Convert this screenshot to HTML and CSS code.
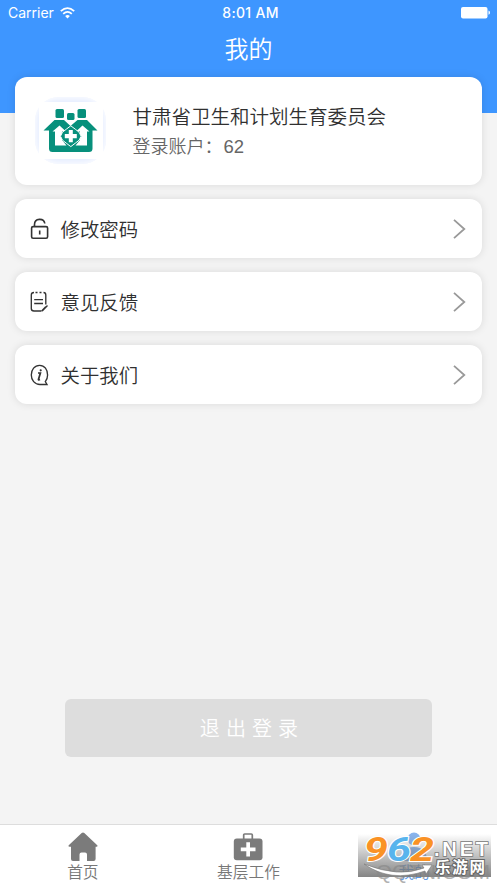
FILE: index.html
```html
<!DOCTYPE html>
<html lang="zh-CN">
<head>
<meta charset="utf-8">
<title>我的</title>
<link rel="stylesheet" href="styles.css">
</head>
<body>
<div class="app">
  <header class="header">
    <div class="status">
      <div class="carrier">Carrier
        <svg width="15" height="12" viewBox="0 0 15 12" fill="none" stroke="#fff" stroke-width="1.8"><path d="M.8 4.2Q7.5-1.9 14.2 4.2M3.2 6.8Q7.5 3 11.8 6.8"/><path d="M7.5 11.4 5.1 8.9Q7.5 7 9.9 8.9Z" fill="#fff" stroke="none"/></svg>
      </div>
      <div class="time">8:01 AM</div>
      <div class="battery"><svg width="29" height="12" viewBox="0 0 29 12" fill="#fff"><rect width="26.500" height="11.5" rx="2"/><path d="M27.500 3.6q1.500.4 1.500 2.1t-1.500 2.1z"/></svg></div>
    </div>
    <h1 class="title">我的</h1>
  </header>
  <main class="content">
    <section class="card profile">
      <div class="avatar">
        <svg width="64" height="57" viewBox="0 0 64 57">
          <rect width="64" height="57" fill="#fff"/>
          <g fill="#07907c">
            <rect x="16.500" y="7" width="8.500" height="9" rx="1.500"/><rect x="28" y="11" width="7.500" height="7" rx="1.500"/><rect x="38.500" y="7" width="8.500" height="9" rx="1.500"/>
            <path d="M4.500 28.500 15.500 18H25L31.500 24 38.500 18H48L58.500 28.500H53.500V46.500Q53.500 50 50 50H13.500Q10 50 10 46.500V28.500Z"/>
          </g>
          <path d="M16 43.500V29.500H13.500L20.500 23.500 27 29.500H23V38L27.500 43.500ZM48 43.500V29.500H50.500L43.500 23.500 37 29.500H41V38L36.500 43.500Z" fill="#fff"/>
          <path d="m31.800 23.800 4.500 3.400 3.800 3 2 4-2 4-3.800 3-4.500 3.400-4.500-3.400-3.800-3-2-4 2-4 3.800-3z" fill="#07907c" stroke="#fff" stroke-width="1"/>
          <path d="M29.800 28h4v4h4v4.200h-4v4h-4v-4h-4V32h4z" fill="#fff"/>
        </svg>
      </div>
      <div class="info"><div class="name">甘肃省卫生和计划生育委员会</div><div class="account">登录账户：<span>62</span></div></div>
    </section>
    <a class="card row">
      <svg class="icon" width="20" height="22" viewBox="0 0 20 22"><rect x="1.600" y="8.600" width="16" height="11.600" rx="1.500"/><path d="M4.500 8V6.500C4.500-.2 14-.2 14.800 5.500M9.700 12.500v4"/></svg>
      <span class="label">修改密码</span>
      <svg class="chevron" width="13" height="20" viewBox="0 0 13 20"><path d="m1 .8 10.300 9.200L1 19.200"/></svg>
    </a>
    <a class="card row">
      <svg class="icon thin" width="20" height="22" viewBox="0 0 20 22"><path d="M4 1.500Q1.300 1.500 1.300 4v13.500q0 2.500 2.700 2.500h7.500M5.500 1.500h2M9.500 1.500h2M13.500 1.500q2.300 0 2.300 2.500v9.500M4.200 8.600h8.800M4.200 12.500h8.800"/><path d="m17.500 14.500-5.300 5.500M15.700 15.700l-4 4.300"/></svg>
      <span class="label">意见反馈</span>
      <svg class="chevron" width="13" height="20" viewBox="0 0 13 20"><path d="m1 .8 10.300 9.200L1 19.200"/></svg>
    </a>
    <a class="card row">
      <svg class="icon thin" width="20" height="22" viewBox="0 0 20 22"><path d="M10 20.500C4.600 20.500 1.300 16 1.300 10.900S4.600 1.300 9.600 1.300s8 4.400 8 9.600c0 3-.9 5-2.300 6.700l1.700 2.900z"/><path class="info-mark" d="M8 9h2.400L8.500 15.200q-.3 1.200 1.500.3"/><circle cx="10.700" cy="6.300" r="1.100" fill="#333" stroke="none"/></svg>
      <span class="label">关于我们</span>
      <svg class="chevron" width="13" height="20" viewBox="0 0 13 20"><path d="m1 .8 10.300 9.200L1 19.200"/></svg>
    </a>
    <button class="logout">退出登录</button>
  </main>
  <nav class="tabs">
    <a class="tab"><svg width="30" height="30" viewBox="0 0 30 30" fill="#7b7b7b"><path d="M13.700 1q1.300-1 2.600 0L29 13q1.300 1.600-.5 1.700H27.600V27q0 2-2 2H19v-6.500q0-2-2-2h-3.500q-2 0-2 2V29H5q-2 0-2-2V14.700H1.500Q-.3 14.500 1 13Z"/></svg><span>首页</span></a>
    <a class="tab"><svg width="30" height="30" viewBox="0 0 30 30"><path d="M10.700 8V3q0-1 1-1h6.600q1 0 1 1v5" fill="none" stroke="#7b7b7b" stroke-width="1.700"/><rect x=".8" y="6.500" width="28.700" height="21.800" rx="3" fill="#7b7b7b"/><path d="M13.300 10.200h3.700v5.300h5.500v3.700H17v5.300h-3.700v-5.300H7.800v-3.700h5.500z" fill="#fff"/></svg><span>基层工作</span></a>
    <a class="tab mine"><svg width="30" height="30" viewBox="0 0 30 30" fill="#88b4ed"><circle cx="15" cy="7" r="6.500"/><path d="M2 29q0-14 13-14t13 14z"/></svg><span>我的</span></a>
  </nav>
  <div class="watermark">
    <svg width="147" height="58" viewBox="350 825 147 58">
      <defs><linearGradient id="shade" x2="0" y2="1"><stop stop-color="#777" stop-opacity="0"/><stop offset="1" stop-color="#777" stop-opacity=".9"/></linearGradient></defs>
      <rect x="358" y="834" width="133" height="43" fill="url(#shade)"/>
      <text class="wm-under" x="376" y="879" textLength="114" lengthAdjust="spacingAndGlyphs">QQTN.COM</text>
      <g class="wm-number"><text x="364" y="861" textLength="24" lengthAdjust="spacingAndGlyphs" fill="#fa9225">9</text><text x="387" y="861" textLength="24" lengthAdjust="spacingAndGlyphs" fill="#58b4ed">6</text><text x="410" y="861" textLength="24" lengthAdjust="spacingAndGlyphs" fill="#fa9225">2</text></g>
      <text class="wm-net" x="434" y="856" textLength="54">.NET</text>
      <path d="M364 864q35 14 60 4l-2-3 10 0-6 9-1-3q-34 12-61-7z" fill="#fff" stroke="#777" stroke-width=".6"/>
      <text class="wm-name" x="435" y="873" textLength="50">乐游网</text>
    </svg>
  </div>
</div>
</body>
</html>
```
FILE: styles.css
```css
* { box-sizing: border-box; }
body { margin: 0; background: #f4f4f4; font-family: "Noto Sans CJK SC", sans-serif; font-weight: 350; color: #303030; }
.app { position: relative; height: 883px; display: flex; flex-direction: column; overflow: hidden; }
.header { height: 113px; flex: none; background: #3e96ff; color: #fff; }
.status { height: 26px; padding: 0 7px 0 8px; display: grid; grid-template-columns: 1fr auto 1fr; align-items: center; font: 400 14px/26px Inter, sans-serif; }
.carrier { display: flex; align-items: center; gap: 6px; }
.time { font-weight: 500; font-size: 14px; letter-spacing: .3px; padding-left: 3px; }
.battery { display: flex; justify-content: flex-end; }
.title { margin: 4px 0 0; text-align: center; font-size: 24px; line-height: 36px; font-weight: 350; }
.content { flex: 1; display: flex; flex-direction: column; gap: 14px; padding: 0 15px; margin-top: -36px; }
.card { background: #fff; border-radius: 12px; box-shadow: 0 0 8px rgba(0, 0, 0, .11); }
.profile { height: 108px; display: flex; padding: 18px 20px; gap: 26.5px; }
.avatar { width: 71px; height: 67px; margin-top: 2px; border-radius: 24px; background: #e7eeff; display: flex; align-items: center; justify-content: center; box-shadow: inset 0 0 6px 1px #fff; }
.info { padding-top: 6px; }
.name { font-size: 19.5px; line-height: 30px; }
.account { font-size: 18px; line-height: 29px; color: #666; }
.account span { font: 400 18.5px "Liberation Sans", sans-serif; margin-left: 1px; }
.row { height: 59px; display: flex; align-items: center; padding: 0 16px 0 15px; }
.row svg { fill: none; }
.icon { stroke: #333; stroke-width: 1.6; }
.thin { stroke-width: 1.35; }
.info-mark { stroke-width: 1.7; }
.label { margin-left: 10.5px; font-size: 19.4px; line-height: 29px; padding-bottom: 1px; flex: 1; }
.chevron { stroke: #999; stroke-width: 1.8; }
.logout { width: 367px; height: 58px; margin: auto auto 67px; border: 0; border-radius: 6px; background: #ddd; color: #fff; font: 350 20px/30px "Noto Sans CJK SC", sans-serif; letter-spacing: 6.1px; padding: 0 0 0 7px; }
.tabs { height: 59px; flex: none; border-top: 1px solid #ddd; background: #fff; display: grid; grid-template-columns: repeat(3, 1fr); }
.tab { display: flex; flex-direction: column; align-items: center; padding-top: 7px; font-size: 15.7px; line-height: 19px; color: #777; }
.tab svg { flex: none; }
.mine { color: #5e9ae6; }
.watermark { position: absolute; right: 0; bottom: 0; height: 58px; }
.wm-number { font: italic 700 34px Roboto, sans-serif; stroke: #fff; stroke-width: 2px; paint-order: stroke; }
.wm-net { font: 700 20px "Liberation Sans", sans-serif; fill: #fff; stroke: #777; stroke-width: 1.6px; paint-order: stroke; }
.wm-name { font: 700 15.5px "Noto Sans CJK SC", sans-serif; fill: #fff; stroke: #666; stroke-width: 2px; paint-order: stroke; }
.wm-under { font: 400 20px "Liberation Sans", sans-serif; fill: #888; opacity: .65; }
```
